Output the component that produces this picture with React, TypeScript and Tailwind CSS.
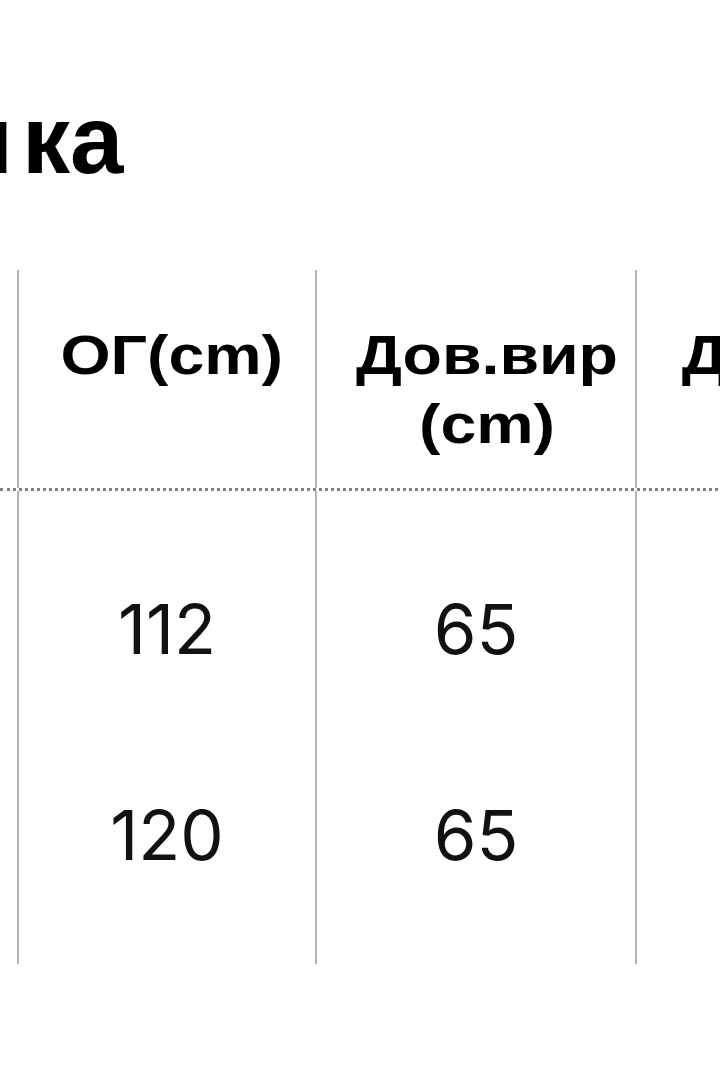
import React from "react"

const head = "inline-block scale-x-[1.15] origin-center font-['Liberation_Sans',sans-serif] font-bold text-[56px] leading-[69px] text-black text-center whitespace-nowrap"
const num = "font-['Inter',sans-serif] font-normal text-[69px] leading-none text-[#111]"

const rows = [
    { og: "112", dov: "65" },
    { og: "120", dov: "65" },
]

export default function App() {
    return (
        <div className="w-[720px] h-[1080px] overflow-hidden bg-white relative">
            <h1 className="ml-[-37px] pt-[92px] font-['Liberation_Sans',sans-serif] font-bold text-[96px] leading-none text-black whitespace-nowrap">
                <span className="ml-[-9px] mr-[9px]">и</span>ка
            </h1>

            <div className="mt-[82px] w-[1000px]">
                {/* header */}
                <div className="flex h-[221px] border-b-[3px] border-dotted border-[#808080]">
                    <div className="w-[17px] shrink-0" />
                    <div className="w-[300px] shrink-0 border-l-2 border-r-2 border-[#b4b4b4] pt-[50px] pl-[10px] text-center">
                        <div className={head}>ОГ(cm)</div>
                    </div>
                    <div className="w-[320px] shrink-0 border-r-2 border-[#b4b4b4] pt-[50px] pl-[22px] text-center">
                        <div className={head}>
                            Дов.вир
                            <br />
                            (cm)
                        </div>
                    </div>
                    <div className="w-[320px] shrink-0 border-r-2 border-[#b4b4b4] pt-[50px] pl-[22px] text-center">
                        <div className={head}>
                            Дов.рук
                            <br />
                            (cm)
                        </div>
                    </div>
                </div>

                {/* body */}
                <div className="flex h-[473px]">
                    <div className="w-[17px] shrink-0" />
                    <div className="w-[300px] shrink-0 border-l-2 border-r-2 border-[#b4b4b4] pt-[35px]">
                        {rows.map((r) => (
                            <div key={r.og} className="h-[206px] flex items-center justify-center">
                                <span className={num}>{r.og}</span>
                            </div>
                        ))}
                    </div>
                    <div className="w-[320px] shrink-0 border-r-2 border-[#b4b4b4] pt-[35px]">
                        {rows.map((r) => (
                            <div key={r.og} className="h-[206px] flex items-center justify-center">
                                <span className={num}>{r.dov}</span>
                            </div>
                        ))}
                    </div>
                    <div className="w-[320px] shrink-0 border-r-2 border-[#b4b4b4]" />
                </div>
            </div>
        </div>
    )
}
